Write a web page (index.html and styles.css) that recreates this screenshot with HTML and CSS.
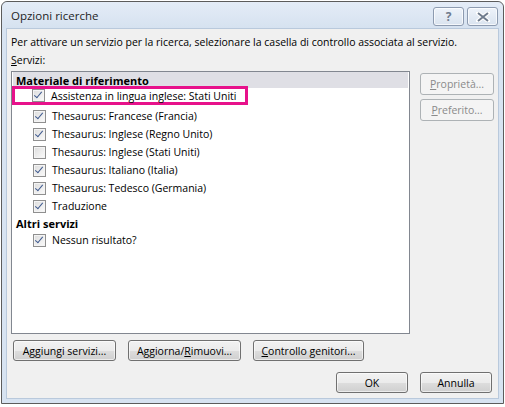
FILE: index.html
```html
<!DOCTYPE html>
<html lang="it">
<head>
    <meta charset="UTF-8">
    <title>Opzioni ricerche</title>
    <link rel="stylesheet" href="styles.css">
</head>
<body>

<!-- finestra di dialogo -->
<div class="window">
    <div class="titlebar">
        <span class="title">Opzioni ricerche</span>
        <div class="caption-buttons">
            <span class="cap-btn">?</span>
            <span class="cap-btn close">
                <svg width="14" height="10" viewBox="0 0 14 10">
                    <path d="M2 1 L12 9 M12 1 L2 9" stroke="#fff" stroke-width="4" stroke-linecap="square"/>
                    <path d="M2 1 L12 9 M12 1 L2 9" stroke="#6f7c8e" stroke-width="2"/>
                </svg>
            </span>
        </div>
    </div>

    <div class="client">
        <div class="intro">Per attivare un servizio per la ricerca, selezionare la casella di controllo associata al servizio.</div>
        <div class="label"><u>S</u>ervizi:</div>

        <div class="main-row">
            <div class="listbox">
                <div class="group-head shaded">Materiale di riferimento</div>
                <div class="item marked"><span class="chk on"></span>Assistenza in lingua inglese: Stati Uniti</div>
                <div class="item"><span class="chk on"></span>Thesaurus: Francese (Francia)</div>
                <div class="item"><span class="chk on"></span>Thesaurus: Inglese (Regno Unito)</div>
                <div class="item"><span class="chk"></span>Thesaurus: Inglese (Stati Uniti)</div>
                <div class="item"><span class="chk on"></span>Thesaurus: Italiano (Italia)</div>
                <div class="item"><span class="chk on"></span>Thesaurus: Tedesco (Germania)</div>
                <div class="item"><span class="chk on"></span>Traduzione</div>
                <div class="group-head">Altri servizi</div>
                <div class="item"><span class="chk on"></span>Nessun risultato?</div>
            </div>

            <div class="side-buttons">
                <span class="btn disabled side"><u>P</u>roprietà...</span>
                <span class="btn disabled side"><u>P</u>referito...</span>
            </div>
        </div>

        <div class="tools-row">
            <span class="btn tool-1">A<u>g</u>giungi servizi...</span>
            <span class="btn tool-2">Aggiorna/<u>R</u>imuovi...</span>
            <span class="btn tool-3"><u>C</u>ontrollo genitori...</span>
        </div>

        <div class="dialog-row">
            <span class="btn dlg">OK</span>
            <span class="btn dlg">Annulla</span>
        </div>
    </div>
</div>

</body>
</html>
```

FILE: styles.css
```css
/* === finestra stile Windows 7 === */
body {
    margin: 0;
    background: #fff;
    font-family: "Open Sans", "Noto Sans", sans-serif;
    font-size: 10.5px;
    color: #000;
    white-space: nowrap;
}

.window {
    margin: 1px 0 0 1px;
    width: 493px;
    height: 397px;
    border: 1px solid #5c5c5c;
    border-radius: 6px 6px 0 0;
    padding: 0 4px 4px 4px;
    background: #d7e3f1;
    display: flex;
    flex-direction: column;
}

/* barra del titolo */
.titlebar {
    height: 26px;
    display: flex;
    align-items: center;
    justify-content: space-between;
    background: linear-gradient(#e4ecf7, #d6e2f0);
    margin: 0 -4px;
    padding: 0 5px 0 9px;
    border-radius: 6px 6px 0 0;
}
.title {
    font-size: 11.5px;
    color: #1e1e1e;
    margin-top: 1px;
}
.caption-buttons {
    display: flex;
    gap: 3px;
    margin-top: 3px;
}
.cap-btn {
    width: 29px;
    height: 17px;
    border: 1px solid #8d9bb0;
    border-radius: 3px;
    background: linear-gradient(#eef3fa, #d9e3ef);
    display: flex;
    align-items: center;
    justify-content: center;
    color: #6f7c8e;
    font-weight: bold;
    font-size: 12px;
    box-shadow: inset 0 0 0 1px rgba(255, 255, 255, 0.7);
}

/* area client */
.client {
    flex: 1;
    background: #f0f0f0;
    border: 1px solid #b9c9dc;
    padding: 5px 0 0 4px;
    display: flex;
    flex-direction: column;
}
.intro {
    height: 17px;
    line-height: 17px;
}
.label {
    height: 17px;
    line-height: 17px;
    margin-top: 1px;
}

.main-row {
    display: flex;
    margin-top: 2px;
}
.listbox {
    width: 395px;
    height: 261px;
    border: 1px solid #828790;
    background: #fff;
    padding: 0 1px;
}
.group-head {
    height: 14px;
    line-height: 14px;
    font-weight: bold;
    font-size: 11px;
    padding-left: 3px;
    margin-top: 2px;
}
.group-head.shaded {
    background: #dfdfe5;
    margin-top: 0;
    height: 16px;
    line-height: 18px;
}
.item {
    height: 18px;
    display: flex;
    align-items: center;
    padding-left: 20px;
}
.item.marked {
    height: 13px;
    width: 213px;
    border: 3px solid #e7128b;
    margin: -2px 0 2px -1px;
    padding-left: 17px;
}

/* caselle di controllo */
.chk {
    flex: none;
    width: 11px;
    height: 11px;
    border: 1px solid #8f8f8f;
    background: linear-gradient(135deg, #dcdcdc, #fbfbfb);
    box-shadow: inset 0 0 0 1px #f4f4f4;
    margin-right: 6px;
    position: relative;
}
.chk.on::after {
    content: "";
    position: absolute;
    left: 3px;
    top: 0px;
    width: 3px;
    height: 7px;
    border: solid #3f5a8f;
    border-width: 0 1.5px 1.5px 0;
    transform: rotate(40deg);
}

/* pulsanti */
.btn {
    display: flex;
    align-items: center;
    justify-content: center;
    height: 19px;
    border: 1px solid #707070;
    border-radius: 3px;
    background: linear-gradient(#f2f2f2 0%, #ebebeb 50%, #dddddd 51%, #cfcfcf 100%);
    box-shadow: inset 0 0 0 1px rgba(255, 255, 255, 0.6);
    box-sizing: content-box;
}
.btn.disabled {
    border-color: #adb2b5;
    background: #f4f4f4;
    color: #8a8a8a;
    box-shadow: none;
}
.side-buttons {
    display: flex;
    flex-direction: column;
    gap: 4px;
    margin: 2px 0 0 10px;
}
.btn.side {
    width: 72px;
    height: 20px;
}

.tools-row {
    display: flex;
    gap: 12px;
    margin: 6px 0 0 2px;
}
.tool-1 { width: 101px; }
.tool-2 { width: 111px; }
.tool-3 { width: 109px; }

.dialog-row {
    display: flex;
    justify-content: flex-end;
    gap: 12px;
    margin: 11px 6px 0 0;
}
.btn.dlg {
    width: 70px;
}
```
